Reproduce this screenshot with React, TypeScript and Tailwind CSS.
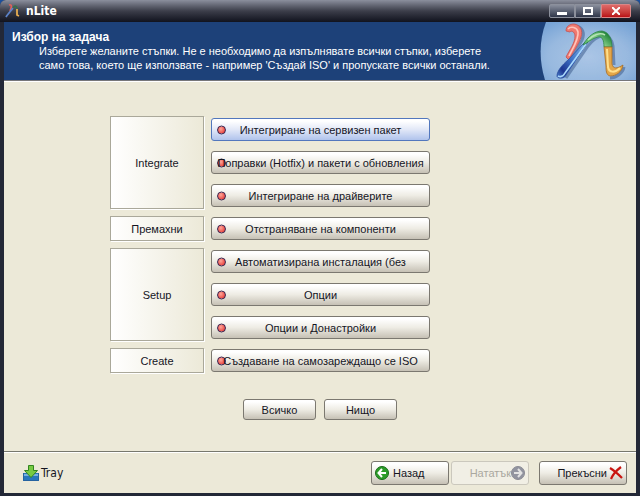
import { useState } from 'react';
import type { ReactNode } from 'react';

type Group = {
    label: string;
    padding: string;
    tasks: string[];
};

const GROUPS: Group[] = [
    {
        label: 'Integrate',
        padding: 'py-0.5',
        tasks: [
            'Интегриране на сервизен пакет',
            'Поправки (Hotfix) и пакети с обновления',
            'Интегриране на драйверите',
        ],
    },
    {
        label: 'Премахни',
        padding: 'py-px',
        tasks: ['Отстраняване на компоненти'],
    },
    {
        label: 'Setup',
        padding: 'py-0.5',
        tasks: [
            'Автоматизирана инсталация (без',
            'Опции',
            'Опции и Донастройки',
        ],
    },
    {
        label: 'Create',
        padding: 'py-px',
        tasks: ['Създаване на самозареждащо се ISO'],
    },
];

const BUTTON =
    'relative rounded-[3px] border border-[#7b7870] bg-linear-to-b from-white from-10% via-[#eeece4] via-50% to-[#c6c1b5] whitespace-nowrap text-[#15151f]';

const BUTTON_SELECTED =
    'relative rounded-[3px] border border-[#5277bd] bg-linear-to-b from-white from-10% via-[#e2e8f7] via-50% to-[#b0c3ec] whitespace-nowrap text-[#15151f]';

function NLogo() {
    return (
        <svg
            viewBox="0 0 96 58"
            className="h-[58px] w-24 shrink-0"
            aria-hidden="true"
        >
            <defs>
                <radialGradient id="globe" cx="0.5" cy="0.6" r="0.7">
                    <stop offset="0" stopColor="#abc6e6" />
                    <stop offset="0.6" stopColor="#98b9df" />
                    <stop offset="1" stopColor="#78a4d6" />
                </radialGradient>
                <linearGradient id="stem" x1="1" y1="0" x2="0" y2="1">
                    <stop offset="0" stopColor="#8cc0ee" />
                    <stop offset="0.5" stopColor="#3f74c8" />
                    <stop offset="0.8" stopColor="#1c3590" />
                    <stop offset="1" stopColor="#4f83d0" />
                </linearGradient>
                <linearGradient id="leaf" x1="0" y1="1" x2="1" y2="0.4">
                    <stop offset="0" stopColor="#55b45e" />
                    <stop offset="0.6" stopColor="#7fcb84" />
                    <stop offset="1" stopColor="#1c7f34" />
                </linearGradient>
            </defs>
            <path d="M6 0H96V58H5C-1 39-1 18 6 0Z" fill="url(#globe)" />
            <g fill="none" stroke="#2b4a7c" strokeWidth="3" opacity="0.45">
                <path d="M36 4C43 5 45 12 42 18L31 38" />
                <path d="M26 56L48 24C57 13 70 8 73 24L74 43" />
                <path d="M70 56C76 56 83 51 84 45" />
            </g>
            <path
                d="M26 9C26 4 30 2 34 2C41 3 43 9 41 15C39 22 33 30 29 38L26 35C30 27 35 21 35 14C35 10 31 8 30 10Z"
                fill="#f0796f"
                stroke="#c4504f"
                strokeWidth="0.8"
            />
            <path d="M28 7C31 4 37 5 38 10C39 17 33 26 29 34" fill="none" stroke="#ffc4ba" strokeWidth="1.6" />
            <path
                d="M28 38L44 21L48 20L26 53C25 57 17 57 17 54C17 49 22 43 28 38Z"
                fill="url(#stem)"
                stroke="#2c4f9e"
                strokeWidth="0.8"
            />
            <path d="M18 54C20 55 23 55 25 51L46 22" fill="none" stroke="#a8d7fb" strokeWidth="1.6" />
            <path
                d="M43 23C48 14 55 9 62 9C69 10 72 17 72 25H64C64 18 62 14 58 15C52 16 48 21 43 23Z"
                fill="url(#leaf)"
                stroke="#2c8446"
                strokeWidth="0.8"
            />
            <path d="M48 18C53 13 60 10 65 13" fill="none" stroke="#b5e3b4" strokeWidth="1.6" />
            <path
                d="M64 25H72L72 42C73 47 77 47 83 43C82 50 76 54 70 54C66 53 66 48 66 44Z"
                fill="#e3a648"
                stroke="#a66b22"
                strokeWidth="0.8"
            />
            <path d="M67 27L68 45C69 51 75 51 80 46" fill="none" stroke="#ffdf8b" strokeWidth="2" />
        </svg>
    );
}

function SmallLogo() {
    return (
        <svg viewBox="0 0 16 16" className="size-4" fill="none" aria-hidden="true">
            <path d="M4 2C7 1 7 4 5 8" stroke="#d9625f" strokeWidth="1.8" />
            <path d="M1 14C2 12 5 9 8 5" stroke="#5c83c9" strokeWidth="1.8" />
            <path d="M8 5C10 2 12 3 12 6" stroke="#35704a" strokeWidth="1.6" />
            <path d="M12 6V12L14 13" stroke="#e7ad51" strokeWidth="1.8" />
        </svg>
    );
}

function Dot() {
    return (
        <span className="absolute top-1/2 left-[5px] size-[9px] -translate-y-1/2 rounded-full border border-[#3a2550] bg-radial-[at_40%_35%] from-[#ffa79a] to-[#ea4a45] to-70%" />
    );
}

function TitleBar() {
    const frame =
        'flex h-[14px] items-center justify-center border border-[#8c909c] bg-linear-to-b from-[#8a8f9d] to-[#30374a]';

    return (
        <div className="flex h-[22px] items-center bg-linear-to-b from-[#8b8f9d] via-[#3c3e4a] via-50% to-[#11131e] pr-[9px] pl-[5px]">
            <SmallLogo />
            <h1 className="ml-[5px] grow font-['DejaVu_Sans_Condensed','Liberation_Sans',sans-serif] text-[12px] font-bold text-white">
                nLite
            </h1>
            <button aria-label="Minimize" className={`${frame} w-[26px] rounded-l-xs`}>
                <svg viewBox="0 0 10 8" className="h-2 w-[10px]">
                    <path d="M0 5H10V8H0Z" fill="white" />
                </svg>
            </button>
            <button aria-label="Maximize" className={`${frame} w-[26px]`}>
                <svg viewBox="0 0 10 8" className="h-2 w-[10px]">
                    <path d="M1 1H9V7H1Z" fill="none" stroke="white" strokeWidth="2" />
                </svg>
            </button>
            <button
                aria-label="Close"
                className="flex h-[14px] w-[30px] items-center justify-center rounded-r-xs border border-[#d98787] bg-linear-to-b from-[#de6969] to-[#b90c15]"
            >
                <svg viewBox="0 0 8 8" className="size-2">
                    <path d="M0 0L8 8M8 0L0 8" stroke="white" strokeWidth="2" />
                </svg>
            </button>
        </div>
    );
}

function Header() {
    return (
        <header className="flex h-[59px] justify-between border-b border-[#77777a] bg-[#1d4179] text-white">
            <div className="pt-2 pl-2">
                <h2 className="text-[12px] leading-[14px] font-bold">
                    Избор на задача
                </h2>
                <p className="pl-[27px] leading-[14px]">
                    Изберете желаните стъпки. Не е необходимо да изпълнявате всички стъпки, изберете
                    <br />
                    само това, което ще използвате - например &#39;Създай ISO&#39; и пропускате всички останали.
                </p>
            </div>
            <NLogo />
        </header>
    );
}

function SmallButton({ children, onClick }: { children: ReactNode; onClick: () => void }) {
    return (
        <button onClick={onClick} className={`${BUTTON} h-[21px] w-[73px]`}>
            {children}
        </button>
    );
}

function BackIcon() {
    return (
        <svg viewBox="0 0 14 14" className="size-[14px]" aria-hidden="true">
            <circle cx="7" cy="7" r="6.5" fill="#2d9c29" stroke="#176c19" />
            <path d="M11 7H4M7 3L3.5 7L7 11" fill="none" stroke="white" strokeWidth="2" />
        </svg>
    );
}

function NextIcon() {
    return (
        <svg viewBox="0 0 14 14" className="size-[14px]" aria-hidden="true">
            <circle cx="7" cy="7" r="6.5" fill="#9294a0" stroke="#8a8b94" />
            <path d="M3 7H10M7 3L10.5 7L7 11" fill="none" stroke="#e3e3e3" strokeWidth="2" />
        </svg>
    );
}

function CancelIcon() {
    return (
        <svg viewBox="0 0 14 14" className="size-[14px]" aria-hidden="true">
            <path d="M1 2C6 5 9 8 13 12M12 1C8 4 4 8 2 13" fill="none" stroke="#c91510" strokeWidth="2.2" />
        </svg>
    );
}

function TrayIcon() {
    return (
        <svg viewBox="0 0 16 17" className="h-[17px] w-4" aria-hidden="true">
            <path d="M0 8H16V16H0Z" fill="#2877bd" />
            <path d="M1 9H15V11H1Z" fill="#79afe0" />
            <path d="M0.5 8V15.5H15.5V8" fill="none" stroke="#2562a0" />
            <path d="M5.5 0.5H10.5V5.5H14.5L8 12.5L1.5 5.5H5.5Z" fill="#77cb43" stroke="#32851f" />
        </svg>
    );
}

function Footer() {
    return (
        <footer className="flex h-[41px] items-center justify-end border-t border-white pr-[9px] pl-[19px]">
            <button className="mr-auto flex items-center gap-0.5 font-['DejaVu_Sans_Condensed','Liberation_Sans',sans-serif] text-[12px]">
                <TrayIcon />
                Tray
            </button>
            <button className={`${BUTTON} flex h-6 w-[78px] items-center gap-1 pl-[3px]`}>
                <BackIcon />
                Назад
            </button>
            <button
                disabled
                className="ml-0.5 flex h-6 w-[78px] items-center justify-end rounded-[3px] border border-[#cbc8bd] bg-[#f1efe5] pr-[3px] text-[#aaa89f]"
            >
                Нататък
                <NextIcon />
            </button>
            <button className={`${BUTTON} ml-[10px] flex h-6 w-[88px] items-center justify-end gap-0.5 pr-[3px]`}>
                Прекъсни
                <CancelIcon />
            </button>
        </footer>
    );
}

export default function App() {
    const [selected, setSelected] = useState<string[]>([GROUPS[0].tasks[0]]);

    return (
        <div className="bg-[#1c4f9c] font-['Liberation_Sans',sans-serif] text-[11px] leading-[14px] text-[#15151f]">
            <div className="flex min-h-screen flex-col overflow-hidden rounded-t-md bg-[#232837]">
                <TitleBar />
                <div className="mx-1 mb-[3px] flex grow flex-col bg-[#ece9d8]">
                    <Header />
                    <main className="grow border-t border-b border-t-white border-b-[#77786e] pt-[34px]">
                        <div className="flex flex-col gap-[7px] pl-[106px]">
                            {GROUPS.map((group) => (
                                <section key={group.label} className="flex gap-[7px]">
                                    <h3 className="flex w-[94px] items-center justify-center border border-[#aaa89a] bg-linear-to-r from-white to-[#ece9d8] shadow-[1px_1px_0_white]">
                                        {group.label}
                                    </h3>
                                    <div className={`flex w-[219px] flex-col gap-[10px] ${group.padding}`}>
                                        {group.tasks.map((task) => (
                                            <button
                                                key={task}
                                                onClick={() => setSelected([task])}
                                                className={`h-[23px] ${selected.includes(task) ? BUTTON_SELECTED : BUTTON}`}
                                            >
                                                <Dot />
                                                <span className="relative">{task}</span>
                                            </button>
                                        ))}
                                    </div>
                                </section>
                            ))}
                        </div>
                        <div className="mt-[26px] flex justify-center gap-2">
                            <SmallButton onClick={() => setSelected(GROUPS.flatMap((group) => group.tasks))}>
                                Всичко
                            </SmallButton>
                            <SmallButton onClick={() => setSelected([])}>Нищо</SmallButton>
                        </div>
                    </main>
                    <Footer />
                </div>
            </div>
        </div>
    );
}
